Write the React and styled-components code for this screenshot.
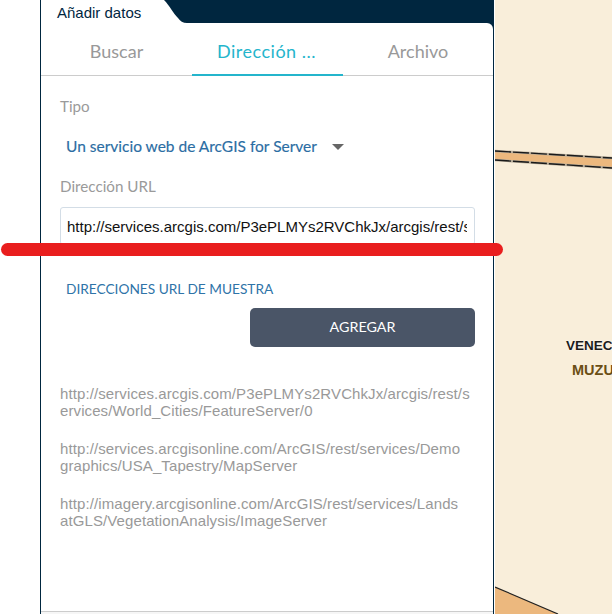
import React from 'react';
import styled, { createGlobalStyle } from 'styled-components';

const GlobalStyle = createGlobalStyle`
  html, body {
    margin: 0;
    padding: 0;
    background: #fff;
  }
  * {
    box-sizing: border-box;
  }
`;

const tabs = ['Buscar', 'Dirección ...', 'Archivo'];

const samples = [
  ['http://services.arcgis.com/P3ePLMYs2RVChkJx/arcgis/rest/s', 'ervices/World_Cities/FeatureServer/0'],
  ['http://services.arcgisonline.com/ArcGIS/rest/services/Demo', 'graphics/USA_Tapestry/MapServer'],
  ['http://imagery.arcgisonline.com/ArcGIS/rest/services/Lands', 'atGLS/VegetationAnalysis/ImageServer'],
];

const App = () => {
  return (
    <Page>
      <GlobalStyle />
      <Panel>
        <TitleBar>
          <TitleTab>
            <span>Añadir datos</span>
            <svg width="24" height="23" viewBox="0 0 24 23">
              <path d="M0 0H1C7 6 10 13 15 18C17 21 20 23 24 23H0Z" fill="#fff" />
            </svg>
          </TitleTab>
        </TitleBar>
        <Content>
          <TabRow>
            {tabs.map((tab, i) => (
              <Tab key={tab} $active={i === 1}>{tab}</Tab>
            ))}
          </TabRow>
          <Form>
            <Label>Tipo</Label>
            <Select>
              Un servicio web de ArcGIS for Server
              <Caret />
            </Select>
            <Label>Dirección URL</Label>
            <UrlInput
              readOnly
              value="http://services.arcgis.com/P3ePLMYs2RVChkJx/arcgis/rest/services/World_Cities/FeatureServer/0"
            />
            <SampleLink>DIRECCIONES URL DE MUESTRA</SampleLink>
            <ButtonRow>
              <AddButton>AGREGAR</AddButton>
            </ButtonRow>
            <Samples>
              {samples.map(([first, second]) => (
                <Sample key={first}>
                  {first}
                  <br />
                  {second}
                </Sample>
              ))}
            </Samples>
          </Form>
          <Footer />
        </Content>
      </Panel>
      <MapArea>
        <MapDrawing viewBox="0 0 117 614" width="117" height="614">
          <path d="M0 151L117 158V168L0 160Z" fill="#ecb87e" />
          <path d="M0 151L117 158M0 160L117 168" stroke="#b9ae9c" strokeWidth="2.5" />
          <path d="M0 151L117 158M0 160L117 168" stroke="#1a1a1a" strokeWidth="1.4" strokeDasharray="16 2" />
          <path d="M0 587L63 614H0Z" fill="#ecb87e" />
          <path d="M0 587L63 614" stroke="#222" strokeWidth="1.2" />
        </MapDrawing>
        <CityLabel>VENEC</CityLabel>
        <TownLabel>MUZU</TownLabel>
      </MapArea>
      <Highlight />
    </Page>
  );
};

export default App;

const Page = styled.div`
  position: relative;
  display: flex;
  width: 612px;
  height: 614px;
  padding-left: 40px;
  overflow: hidden;
  background: #fff;
`;

const Panel = styled.div`
  display: flex;
  flex-direction: column;
  width: 454px;
  height: 100%;
  border-left: 1px solid #00263f;
  border-right: 1px solid #00263f;
  background: #00263f;
`;

const TitleBar = styled.div`
  display: flex;
  flex: 0 0 23px;
  height: 23px;
`;

const TitleTab = styled.div`
  display: flex;
  height: 23px;
  background: transparent;

  span {
    display: block;
    width: 122px;
    height: 23px;
    padding: 4px 0 0 16px;
    background: #fff;
    color: #00263f;
    font-family: 'Liberation Sans', Arial, sans-serif;
    font-size: 15px;
    line-height: 18px;
  }
`;

const Content = styled.div`
  display: flex;
  flex-direction: column;
  flex: 1;
  min-height: 0;
  background: #fff;
  border-top-right-radius: 6px;
`;

const TabRow = styled.div`
  display: grid;
  grid-template-columns: 151px 151px 150px;
  height: 53px;
  border-bottom: 1px solid #cccccc;
`;

const Tab = styled.div`
  height: 53px;
  padding: 16px ${({ $active }) => ($active ? '2px' : '0')} 0 0;
  text-align: center;
  font-family: Lato, sans-serif;
  font-size: 18px;
  line-height: 24px;
  letter-spacing: ${({ $active }) => ($active ? '0.5px' : '0')};
  color: ${({ $active }) => ($active ? '#24b5cc' : '#999999')};
  border-bottom: ${({ $active }) => ($active ? '2px solid #24b5cc' : '0')};
`;

const Form = styled.div`
  display: flex;
  flex-direction: column;
  flex: 1;
  min-height: 0;
  padding: 20px 18px 0 19px;
`;

const Label = styled.div`
  font-family: Lato, sans-serif;
  font-size: 15.2px;
  line-height: 20px;
  color: #9a9a9a;
`;

const Select = styled.div`
  display: flex;
  align-items: center;
  height: 40px;
  margin: 10px 0 10px 6px;
  font-family: Lato, sans-serif;
  font-size: 15.5px;
  color: #2b6da3;
  -webkit-text-stroke: 0.15px #2b6da3;
`;

const Caret = styled.span`
  width: 0;
  height: 0;
  margin: 1px 0 0 15px;
  border-left: 6px solid transparent;
  border-right: 6px solid transparent;
  border-top: 6px solid #666666;
`;

const UrlInput = styled.input`
  flex: 0 0 38px;
  width: 415px;
  height: 38px;
  margin-top: 11px;
  padding: 1px 7px 0 6px;
  border: 1px solid #d3dde6;
  border-radius: 3px;
  background: #fff;
  outline: none;
  color: #111111;
  font-family: 'Liberation Sans', Arial, sans-serif;
  font-size: 15px;
`;

const SampleLink = styled.div`
  margin: 35px 0 0 6px;
  font-family: Lato, sans-serif;
  font-size: 13.7px;
  line-height: 18px;
  color: #2f74a8;
`;

const ButtonRow = styled.div`
  display: flex;
  justify-content: flex-end;
  width: 415px;
  margin-top: 10px;
`;

const AddButton = styled.button`
  width: 225px;
  height: 39px;
  padding: 0 0 2px;
  border: 0;
  border-radius: 5px;
  background: #4a5567;
  color: #fff;
  font-family: Lato, sans-serif;
  font-size: 14.3px;
`;

const Samples = styled.div`
  display: flex;
  flex-direction: column;
  gap: 21px;
  width: 415px;
  margin-top: 38px;
`;

const Sample = styled.div`
  font-family: 'Liberation Sans', Arial, sans-serif;
  font-size: 15px;
  line-height: 17px;
  letter-spacing: 0.1px;
  color: #999999;
  white-space: nowrap;
`;

const Footer = styled.div`
  flex: 0 0 3px;
  height: 3px;
  border-top: 1px solid #cccccc;
  background: #f6f6f6;
`;

const MapArea = styled.div`
  position: relative;
  flex: 1;
  margin-left: 1px;
  background: #f9eeda;
`;

const MapDrawing = styled.svg`
  position: absolute;
  top: 0;
  left: 0;
  display: block;
`;

const CityLabel = styled.span`
  position: absolute;
  top: 338px;
  left: 71px;
  font-family: 'Liberation Sans', Arial, sans-serif;
  font-size: 13.5px;
  font-weight: 700;
  line-height: 16px;
  color: #1c1c1c;
  text-shadow: 0 0 2px #fff;
`;

const TownLabel = styled.span`
  position: absolute;
  top: 362px;
  left: 77px;
  font-family: 'Liberation Sans', Arial, sans-serif;
  font-size: 14.5px;
  font-weight: 700;
  line-height: 16px;
  color: #6b4e14;
`;

const Highlight = styled.div`
  position: absolute;
  top: 243px;
  left: 1px;
  width: 502px;
  height: 13px;
  border-radius: 7px;
  background: #e91e1e;
`;
